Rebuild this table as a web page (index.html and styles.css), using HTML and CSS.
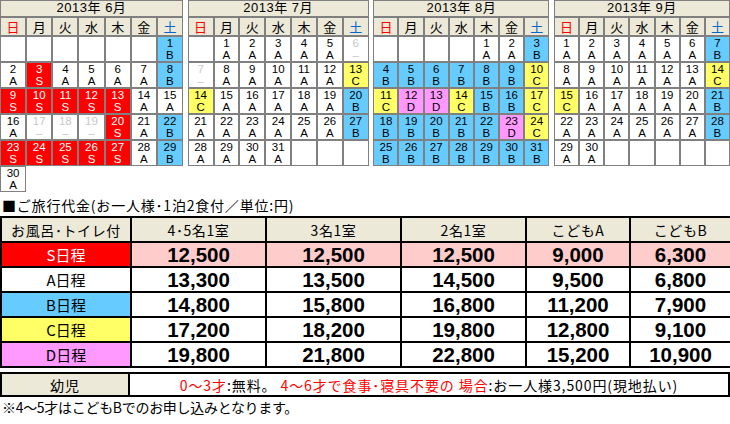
FILE: index.html
```html
<!DOCTYPE html>
<html lang="ja">
<head>
<meta charset="utf-8">
<title>ご旅行代金</title>
<link rel="stylesheet" href="styles.css">
</head>
<body>
<div class="page">
  <div class="cals">
    <div class="cal">
      <div class="ttl">2013年 6月</div>
      <div class="dn sun">日</div><div class="dn">月</div><div class="dn">火</div><div class="dn">水</div><div class="dn">木</div><div class="dn">金</div><div class="dn sat">土</div>
      <div class="d"></div><div class="d"></div><div class="d"></div><div class="d"></div><div class="d"></div><div class="d"></div><div class="d b"><span>1</span><span>B</span></div>
      <div class="d"><span>2</span><span>A</span></div><div class="d s"><span>3</span><span>S</span></div><div class="d"><span>4</span><span>A</span></div><div class="d"><span>5</span><span>A</span></div><div class="d"><span>6</span><span>A</span></div><div class="d"><span>7</span><span>A</span></div><div class="d b"><span>8</span><span>B</span></div>
      <div class="d s"><span>9</span><span>S</span></div><div class="d s"><span>10</span><span>S</span></div><div class="d s"><span>11</span><span>S</span></div><div class="d s"><span>12</span><span>S</span></div><div class="d s"><span>13</span><span>S</span></div><div class="d"><span>14</span><span>A</span></div><div class="d"><span>15</span><span>A</span></div>
      <div class="d"><span>16</span><span>A</span></div><div class="d x"><span>17</span><span>–</span></div><div class="d x"><span>18</span><span>–</span></div><div class="d x"><span>19</span><span>–</span></div><div class="d s"><span>20</span><span>S</span></div><div class="d"><span>21</span><span>A</span></div><div class="d b"><span>22</span><span>B</span></div>
      <div class="d s"><span>23</span><span>S</span></div><div class="d s"><span>24</span><span>S</span></div><div class="d s"><span>25</span><span>S</span></div><div class="d s"><span>26</span><span>S</span></div><div class="d s"><span>27</span><span>S</span></div><div class="d"><span>28</span><span>A</span></div><div class="d b"><span>29</span><span>B</span></div>
      <div class="d"><span>30</span><span>A</span></div>
    </div>
    <div class="cal">
      <div class="ttl">2013年 7月</div>
      <div class="dn sun">日</div><div class="dn">月</div><div class="dn">火</div><div class="dn">水</div><div class="dn">木</div><div class="dn">金</div><div class="dn sat">土</div>
      <div class="d"></div><div class="d"><span>1</span><span>A</span></div><div class="d"><span>2</span><span>A</span></div><div class="d"><span>3</span><span>A</span></div><div class="d"><span>4</span><span>A</span></div><div class="d"><span>5</span><span>A</span></div><div class="d x"><span>6</span><span>–</span></div>
      <div class="d x"><span>7</span><span>–</span></div><div class="d"><span>8</span><span>A</span></div><div class="d"><span>9</span><span>A</span></div><div class="d"><span>10</span><span>A</span></div><div class="d"><span>11</span><span>A</span></div><div class="d"><span>12</span><span>A</span></div><div class="d c"><span>13</span><span>C</span></div>
      <div class="d c"><span>14</span><span>C</span></div><div class="d"><span>15</span><span>A</span></div><div class="d"><span>16</span><span>A</span></div><div class="d"><span>17</span><span>A</span></div><div class="d"><span>18</span><span>A</span></div><div class="d"><span>19</span><span>A</span></div><div class="d b"><span>20</span><span>B</span></div>
      <div class="d"><span>21</span><span>A</span></div><div class="d"><span>22</span><span>A</span></div><div class="d"><span>23</span><span>A</span></div><div class="d"><span>24</span><span>A</span></div><div class="d"><span>25</span><span>A</span></div><div class="d"><span>26</span><span>A</span></div><div class="d b"><span>27</span><span>B</span></div>
      <div class="d"><span>28</span><span>A</span></div><div class="d"><span>29</span><span>A</span></div><div class="d"><span>30</span><span>A</span></div><div class="d"><span>31</span><span>A</span></div><div class="d"></div><div class="d"></div><div class="d"></div>
    </div>
    <div class="cal">
      <div class="ttl">2013年 8月</div>
      <div class="dn sun">日</div><div class="dn">月</div><div class="dn">火</div><div class="dn">水</div><div class="dn">木</div><div class="dn">金</div><div class="dn sat">土</div>
      <div class="d"></div><div class="d"></div><div class="d"></div><div class="d"></div><div class="d"><span>1</span><span>A</span></div><div class="d"><span>2</span><span>A</span></div><div class="d b"><span>3</span><span>B</span></div>
      <div class="d b"><span>4</span><span>B</span></div><div class="d b"><span>5</span><span>B</span></div><div class="d b"><span>6</span><span>B</span></div><div class="d b"><span>7</span><span>B</span></div><div class="d b"><span>8</span><span>B</span></div><div class="d b"><span>9</span><span>B</span></div><div class="d c"><span>10</span><span>C</span></div>
      <div class="d c"><span>11</span><span>C</span></div><div class="d p"><span>12</span><span>D</span></div><div class="d p"><span>13</span><span>D</span></div><div class="d c"><span>14</span><span>C</span></div><div class="d b"><span>15</span><span>B</span></div><div class="d b"><span>16</span><span>B</span></div><div class="d c"><span>17</span><span>C</span></div>
      <div class="d b"><span>18</span><span>B</span></div><div class="d b"><span>19</span><span>B</span></div><div class="d b"><span>20</span><span>B</span></div><div class="d b"><span>21</span><span>B</span></div><div class="d b"><span>22</span><span>B</span></div><div class="d p"><span>23</span><span>D</span></div><div class="d c"><span>24</span><span>C</span></div>
      <div class="d b"><span>25</span><span>B</span></div><div class="d b"><span>26</span><span>B</span></div><div class="d b"><span>27</span><span>B</span></div><div class="d b"><span>28</span><span>B</span></div><div class="d b"><span>29</span><span>B</span></div><div class="d b"><span>30</span><span>B</span></div><div class="d b"><span>31</span><span>B</span></div>
    </div>
    <div class="cal">
      <div class="ttl">2013年 9月</div>
      <div class="dn sun">日</div><div class="dn">月</div><div class="dn">火</div><div class="dn">水</div><div class="dn">木</div><div class="dn">金</div><div class="dn sat">土</div>
      <div class="d"><span>1</span><span>A</span></div><div class="d"><span>2</span><span>A</span></div><div class="d"><span>3</span><span>A</span></div><div class="d"><span>4</span><span>A</span></div><div class="d"><span>5</span><span>A</span></div><div class="d"><span>6</span><span>A</span></div><div class="d b"><span>7</span><span>B</span></div>
      <div class="d"><span>8</span><span>A</span></div><div class="d"><span>9</span><span>A</span></div><div class="d"><span>10</span><span>A</span></div><div class="d"><span>11</span><span>A</span></div><div class="d"><span>12</span><span>A</span></div><div class="d"><span>13</span><span>A</span></div><div class="d c"><span>14</span><span>C</span></div>
      <div class="d c"><span>15</span><span>C</span></div><div class="d"><span>16</span><span>A</span></div><div class="d"><span>17</span><span>A</span></div><div class="d"><span>18</span><span>A</span></div><div class="d"><span>19</span><span>A</span></div><div class="d"><span>20</span><span>A</span></div><div class="d b"><span>21</span><span>B</span></div>
      <div class="d"><span>22</span><span>A</span></div><div class="d"><span>23</span><span>A</span></div><div class="d"><span>24</span><span>A</span></div><div class="d"><span>25</span><span>A</span></div><div class="d"><span>26</span><span>A</span></div><div class="d"><span>27</span><span>A</span></div><div class="d b"><span>28</span><span>B</span></div>
      <div class="d"><span>29</span><span>A</span></div><div class="d"><span>30</span><span>A</span></div><div class="d"></div><div class="d"></div><div class="d"></div><div class="d"></div><div class="d"></div>
    </div>
  </div>

  <p class="heading">■ご旅行代金(お一人様･1泊2食付／単位:円)</p>

  <table class="price">
    <colgroup>
      <col class="c1"><col class="c2"><col class="c3"><col class="c4"><col class="c5"><col class="c6">
    </colgroup>
    <tr class="hd">
      <td>お風呂･トイレ付</td><td>4･5名1室</td><td>3名1室</td><td>2名1室</td><td>こどもA</td><td>こどもB</td>
    </tr>
    <tr class="row rs">
      <td class="lbl ls">S日程</td><td>12,500</td><td>12,500</td><td>12,500</td><td>9,000</td><td>6,300</td>
    </tr>
    <tr class="row">
      <td class="lbl">A日程</td><td>13,300</td><td>13,500</td><td>14,500</td><td>9,500</td><td>6,800</td>
    </tr>
    <tr class="row">
      <td class="lbl lb">B日程</td><td>14,800</td><td>15,800</td><td>16,800</td><td>11,200</td><td>7,900</td>
    </tr>
    <tr class="row">
      <td class="lbl lc">C日程</td><td>17,200</td><td>18,200</td><td>19,800</td><td>12,800</td><td>9,100</td>
    </tr>
    <tr class="row">
      <td class="lbl ld">D日程</td><td>19,800</td><td>21,800</td><td>22,800</td><td>15,200</td><td>10,900</td>
    </tr>
  </table>

  <table class="infant">
    <tr>
      <td class="ilbl">幼児</td>
      <td class="itxt"><span class="red">0～3才</span>:無料。 <span class="red">4～6才で食事･寝具不要の 場合</span>:お一人様3,500円(現地払い)</td>
    </tr>
  </table>

  <p class="note">※4～5才はこどもBでのお申し込みとなります。</p>
</div>
</body>
</html>
```

FILE: styles.css
```css
html, body {
  margin: 0;
  padding: 0;
  background: #fff;
}
body {
  font-family: "Liberation Sans", "Noto Sans CJK JP", sans-serif;
  color: #000;
  width: 730px;
}
.page {
  width: 730px;
}
.cals {
  display: grid;
  grid-template-columns: 183px 181px 176px 176px;
  justify-content: space-between;
  align-items: start;
}
.cal {
  display: grid;
  grid-template-columns: repeat(7, 1fr);
  grid-template-rows: 17px 19px;
  grid-auto-rows: 26px;
}
.ttl {
  grid-column: 1 / -1;
  background: #ece9d8;
  border: 1px solid #808080;
  font-size: 13px;
  line-height: 14px;
  letter-spacing: 0.5px;
  text-align: center;
  font-family: "Liberation Sans", "Noto Sans CJK JP", sans-serif;
}
.dn {
  background: #ece9d8;
  border: 1px solid #808080;
  font-size: 13px;
  line-height: 17px;
  text-align: center;
  font-family: "Noto Sans CJK JP", sans-serif;
}
.sun { color: #ff0000; }
.sat { color: #0066cc; }
.d {
  border: 1px solid #808080;
  background: #fff;
  display: flex;
  flex-direction: column;
  align-items: center;
  justify-content: center;
  font-size: 11.5px;
  line-height: 12px;
}
.d span { display: block; height: 12px; }
.d.s { background: #ff0000; color: #fff; }
.d.b { background: #66ccff; }
.d.c { background: #ffff66; }
.d.p { background: #ff99ff; }
.d.x { color: #c8c8c8; }

.heading {
  margin: 0;
  padding: 4px 0 0 2px;
  height: 20px;
  font-size: 14px;
  line-height: 18px;
  letter-spacing: 0.8px;
  font-family: "Noto Sans CJK JP", sans-serif;
  white-space: nowrap;
}

.price {
  width: 730px;
  border-collapse: separate;
  border-spacing: 0;
  border: 1px solid #000;
  table-layout: fixed;
}
.price td {
  border: 1px solid #000;
  padding: 0;
  text-align: center;
}
.c1 { width: 130px; }
.c2 { width: 135px; }
.c3 { width: 135px; }
.c4 { width: 125px; }
.c5 { width: 104px; }
.c6 { width: 101px; }
.price .hd td {
  background: #ece9d8;
  height: 23px;
  font-size: 14px;
  letter-spacing: 0.6px;
  font-family: "Noto Sans CJK JP", sans-serif;
  line-height: 16px;
}
.price .row td {
  height: 23px;
  font-size: 20.5px;
  font-weight: bold;
  line-height: 22px;
}
.price .rs td { background: #ffcccc; }
.price .row td.lbl {
  font-size: 15px;
  font-weight: normal;
  font-family: "Noto Sans CJK JP", sans-serif;
  line-height: 18px;
  background: #fff;
}
.price .row td.ls { background: #ff0000; color: #fff; }
.price .row td.lb { background: #66ccff; }
.price .row td.lc { background: #ffff66; }
.price .row td.ld { background: #ff99ff; }

.infant {
  margin-top: 4px;
  width: 730px;
  border-collapse: separate;
  border-spacing: 0;
  border: 1px solid #000;
  table-layout: fixed;
}
.infant td {
  border: 1px solid #000;
  padding: 0;
  height: 21px;
  text-align: center;
  font-size: 14px;
  line-height: 18px;
  font-family: "Noto Sans CJK JP", sans-serif;
  white-space: nowrap;
}
.itxt { letter-spacing: 0.9px; }
.ilbl {
  width: 126px;
  background: #ece9d8;
  letter-spacing: 1px;
}
.red { color: #ff0000; }

.note {
  margin: 2px 0 0 0;
  padding-left: 2px;
  font-size: 14px;
  line-height: 17px;
  letter-spacing: -0.3px;
  font-family: "Noto Sans CJK JP", sans-serif;
  white-space: nowrap;
}
```
